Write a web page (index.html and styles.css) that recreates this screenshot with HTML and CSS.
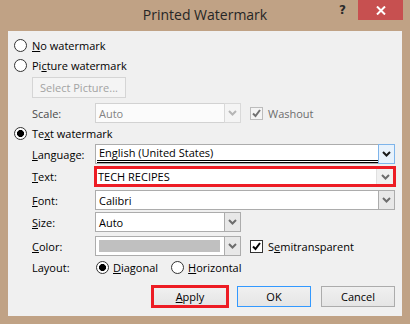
FILE: index.html
```html
<!DOCTYPE html>
<html>
<head>
    <meta charset="UTF-8">
    <title>Printed Watermark</title>
    <link rel="stylesheet" href="styles.css">
</head>
<body>
    <div class="window">
        <!-- Title bar -->
        <div class="titlebar">
            <span></span>
            <span class="title">Printed Watermark</span>
            <span class="caption-btns">
                <span class="help">?</span>
                <span class="close">
                    <svg width="10" height="9" viewBox="0 0 10 9"><path d="M1 0.5l8 8M9 0.5l-8 8" stroke="#fff" stroke-width="2" fill="none"/></svg>
                </span>
            </span>
        </div>

        <div class="client">
            <div class="row r-a">
                <span class="radio"></span><span><u>N</u>o watermark</span>
            </div>
            <div class="row r-b">
                <span class="radio"></span><span>Pi<u>c</u>ture watermark</span>
            </div>
            <div class="row r-c">
                <span class="btn btn-disabled select-pic">Select Picture...</span>
            </div>
            <div class="row field r-d">
                <span class="label disabled-label">Scale:</span>
                <span class="combo combo-short combo-disabled">
                    <span class="combo-text">Auto</span>
                    <span class="combo-btn"><svg width="9" height="6" viewBox="0 0 9 6"><path d="M1 1l3.5 3.5L8 1" stroke="#b5b5b5" stroke-width="2" fill="none"/></svg></span>
                </span>
                <span class="check check-disabled">
                    <svg width="11" height="11" viewBox="0 0 11 11"><path d="M2 5.5l2.5 2.5L9 2" stroke="#707070" stroke-width="2" fill="none"/></svg>
                </span>
                <span class="washout">Washout</span>
            </div>
            <div class="row r-e">
                <span class="radio radio-on"></span><span>Te<u>x</u>t watermark</span>
            </div>
            <div class="row field r-f">
                <span class="label"><u>L</u>anguage:</span>
                <span class="combo combo-full">
                    <span class="combo-text"><span class="lang-text">English (United States)</span></span>
                    <span class="combo-btn combo-btn-hot"><svg width="9" height="6" viewBox="0 0 9 6"><path d="M1 1l3.5 3.5L8 1" stroke="#1a1a1a" stroke-width="2" fill="none"/></svg></span>
                </span>
            </div>
            <div class="row field r-g">
                <span class="label"><u>T</u>ext:</span>
                <span class="mark mark-combo">
                    <span class="combo-text">TECH RECIPES</span>
                    <span class="combo-btn combo-btn-plain"><svg width="9" height="6" viewBox="0 0 9 6"><path d="M1 1l3.5 3.5L8 1" stroke="#6d6d6d" stroke-width="2" fill="none"/></svg></span>
                </span>
            </div>
            <div class="row field r-h">
                <span class="label"><u>F</u>ont:</span>
                <span class="combo combo-full">
                    <span class="combo-text">Calibri</span>
                    <span class="combo-btn"><svg width="9" height="6" viewBox="0 0 9 6"><path d="M1 1l3.5 3.5L8 1" stroke="#6d6d6d" stroke-width="2" fill="none"/></svg></span>
                </span>
            </div>
            <div class="row field r-i">
                <span class="label"><u>S</u>ize:</span>
                <span class="combo combo-short">
                    <span class="combo-text">Auto</span>
                    <span class="combo-btn"><svg width="9" height="6" viewBox="0 0 9 6"><path d="M1 1l3.5 3.5L8 1" stroke="#6d6d6d" stroke-width="2" fill="none"/></svg></span>
                </span>
            </div>
            <div class="row field r-j">
                <span class="label"><u>C</u>olor:</span>
                <span class="combo combo-short">
                    <span class="combo-text"><span class="swatch"></span></span>
                    <span class="combo-btn"><svg width="9" height="6" viewBox="0 0 9 6"><path d="M1 1l3.5 3.5L8 1" stroke="#6d6d6d" stroke-width="2" fill="none"/></svg></span>
                </span>
                <span class="check">
                    <svg width="11" height="11" viewBox="0 0 11 11"><path d="M2 5.5l2.5 2.5L9 2" stroke="#000" stroke-width="2" fill="none"/></svg>
                </span>
                <span>S<u>e</u>mitransparent</span>
            </div>
            <div class="row field r-k">
                <span class="label">Layout:</span>
                <span class="radio radio-on"></span><span class="opt"><u>D</u>iagonal</span>
                <span class="radio"></span><span><u>H</u>orizontal</span>
            </div>
            <div class="row r-l">
                <span class="mark mark-btn"><span class="btn btn-inner"><u>A</u>pply</span></span>
                <span class="btn btn-default">OK</span>
                <span class="btn btn-cancel">Cancel</span>
            </div>
        </div>
    </div>
</body>
</html>
```

FILE: styles.css
```css
/* Windows 8 style dialog */
body {
    margin: 0;
    background-color: #c0a285;
    font-family: "Open Sans", "Noto Sans", sans-serif;
    font-size: 11px;
    color: #000;
}
u {
    text-decoration: underline;
    text-underline-offset: 1px;
}
.window {
    width: 410px;
    height: 324px;
    background-color: #c0a285; /* frame tan */
}

/* Title bar */
.titlebar {
    height: 31px;
    display: grid;
    grid-template-columns: 1fr auto 1fr;
}
.title {
    font-size: 14px;
    line-height: 29px;
    color: #262626;
}
.caption-btns {
    display: flex;
    justify-content: flex-end;
    align-items: flex-start;
    padding-right: 7px;
}
.help {
    font-family: "DejaVu Sans", sans-serif;
    font-weight: bold;
    font-size: 12px;
    line-height: 20px;
    color: #2a2a2a;
    margin-right: 12px;
}
.close {
    width: 45px;
    height: 20px;
    background-color: #c75050;
    display: flex;
    align-items: center;
    justify-content: center;
}

/* Client area */
.client {
    margin: 0 8px;
    height: 285px;
    box-sizing: border-box;
    background-color: #f0f0f0;
    display: flex;
    flex-direction: column;
    padding: 5px 7px 0 6px;
}
.row {
    display: flex;
    align-items: center;
    white-space: nowrap;
}
.field {
    padding-left: 18px;
}
.label {
    width: 63px;
    flex-shrink: 0;
}
.disabled-label {
    color: #4a4a4a;
}
.r-a { height: 18px; }
.r-b { height: 18px; margin-top: 2px; }
.r-c { height: 21px; margin-top: 3px; padding-left: 18px; }
.r-d { height: 20px; margin-top: 5px; }
.r-e { height: 18px; margin-top: 1px; }
.r-f { height: 20px; margin-top: 2px; }
.r-g { height: 21px; margin-top: 2px; }
.r-h { height: 20px; margin-top: 3px; }
.r-i { height: 20px; margin-top: 2px; }
.r-j { height: 20px; margin-top: 4px; }
.r-k { height: 18px; margin-top: 2px; }
.r-l { height: 23px; margin-top: 9px; justify-content: flex-end; }

/* Radio buttons */
.radio {
    width: 13px;
    height: 13px;
    box-sizing: border-box;
    border: 1px solid #333;
    border-radius: 50%;
    background-color: #fff;
    margin-right: 5px;
    flex-shrink: 0;
}
.radio-on {
    background: radial-gradient(circle, #000 3.2px, #fff 3.8px);
}
.r-k .radio {
    margin-left: 1px;
    margin-right: 4px;
}
.opt {
    margin-right: 12px;
}

/* Check boxes */
.check {
    width: 13px;
    height: 13px;
    box-sizing: border-box;
    border: 1px solid #333;
    background-color: #fff;
    margin-left: 9px;
    margin-right: 5px;
    display: flex;
    align-items: center;
    justify-content: center;
}
.check-disabled {
    border-color: #bcbcbc;
    background-color: #f4f4f4;
}
.washout {
    color: #6d6d6d;
}

/* Combo boxes */
.combo {
    height: 20px;
    box-sizing: border-box;
    border: 1px solid #acacac;
    background-color: #fff;
    display: flex;
}
.combo-full {
    flex: 1;
}
.combo-short {
    width: 146px;
}
.combo-text {
    flex: 1;
    display: flex;
    align-items: center;
    padding-left: 3px;
    overflow: hidden;
}
.combo-btn {
    width: 17px;
    margin: -1px -1px -1px 0;
    box-sizing: border-box;
    border: 1px solid #acacac;
    background-color: #e8e8e8;
    display: flex;
    align-items: center;
    justify-content: center;
}
.combo-btn-hot {
    border-color: #7eb4ea;
    background-color: #e8f2fc;
}
.combo-btn-plain {
    margin: 0;
    border: none;
    border-left: 1px solid #e0e0e0;
    background-color: #f0f0f0;
}
.combo-disabled {
    border-color: #d2d2d2;
    background-color: #fbfbfb;
    color: #838383;
}
.combo-disabled .combo-btn {
    border-color: #d9d9d9;
    background-color: #f4f4f4;
}
.lang-text {
    flex: 1;
    height: 100%;
    box-sizing: border-box;
    border-bottom: 3px double #000;
    line-height: 16px;
    margin-left: -2px;
    padding-left: 2px;
}
.swatch {
    width: 121px;
    height: 12px;
    background-color: #c0c0c0;
}

/* Red annotation boxes */
.mark {
    border: 3px solid #ed1c24;
    box-sizing: border-box;
    display: flex;
}
.mark-combo {
    height: 21px;
    flex: 1;
    margin-left: -1px;
    margin-right: -1px;
    background-color: #fff;
}
.mark-combo .combo-text {
    padding-left: 1px;
}
.mark-btn {
    width: 78px;
    height: 23px;
    padding: 0;
}

/* Buttons */
.btn {
    height: 21px;
    box-sizing: border-box;
    border: 1px solid #acacac;
    background: linear-gradient(#f0f0f0, #e5e5e5);
    display: flex;
    align-items: center;
    justify-content: center;
}
.btn-disabled {
    border-color: #d5d5d5;
    background: #f4f4f4;
    color: #a3a3a3;
}
.select-pic {
    width: 94px;
}
.btn-inner {
    flex: 1;
    height: 17px;
    border: none;
}
.btn-default {
    width: 74px;
    margin-left: 8px;
    border-color: #3399ff;
}
.btn-cancel {
    width: 74px;
    margin-left: 10px;
}
```
